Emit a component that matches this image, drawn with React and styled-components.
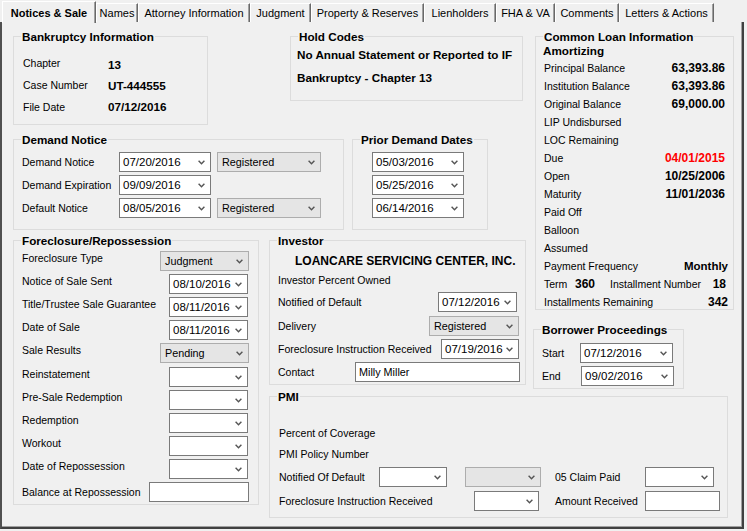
import React from 'react';
import styled, { createGlobalStyle } from 'styled-components';

const GlobalStyle = createGlobalStyle`
  html, body { margin: 0; padding: 0; background: #f0f0f0; }
  body { font-family: "Liberation Sans", Arial, sans-serif; font-size: 10.5px; color: #000; }
  * { box-sizing: border-box; }
`;

const Window = styled.div`
  width: 747px;
  height: 531px;
  background: #f0f0f0;
  display: flex;
  flex-direction: column;
  overflow: hidden;
`;

const TabStrip = styled.div`
  display: flex;
  align-items: flex-end;
  height: 22px;
  padding-left: 2px;
  flex-shrink: 0;
`;

const Tab = styled.div`
  width: ${(p) => p.$w}px;
  height: ${(p) => (p.$active ? 22 : 19)}px;
  display: flex;
  align-items: center;
  justify-content: center;
  padding-top: ${(p) => (p.$active ? 1 : 0)}px;
  font-size: 11px;
  font-weight: ${(p) => (p.$active ? 700 : 400)};
  white-space: nowrap;
  border-top: 1px solid #ffffff;
  border-left: 1px solid #ffffff;
  border-right: 1px solid #696969;
  box-shadow: inset -1px 0 0 #a0a0a0;
  margin-bottom: ${(p) => (p.$active ? -1 : 0)}px;
  position: relative;
  z-index: ${(p) => (p.$active ? 1 : 0)};
  background: #f0f0f0;
`;

const Panel = styled.div`
  width: 744px;
  height: 507px;
  border-left: 2px solid #505050;
  border-right: 2px solid #404040;
  border-bottom: 2px solid #404040;
  box-shadow: inset -1px -1px 0 #a0a0a0;
  padding: 14px 0 0 11px;
`;

const Grid = styled.div`
  display: grid;
  grid-template-columns: 195px 51px 10px 21px 54px 8px 136px 35px 3px 7px 2px 149px 44px 6px;
  grid-template-rows: 65px 24px 14px 91px 10px 70px 19px 56px 4px 7px 109px 13px;
`;

const Group = styled.section`
  grid-column: ${(p) => p.$col};
  grid-row: ${(p) => p.$row};
  border: 1px solid #dcdcdc;
  display: flex;
  flex-direction: column;
  min-width: 0;
`;

const Legend = styled.div`
  align-self: flex-start;
  margin: -7px 0 0 7px;
  padding: 0 1px;
  height: 14px;
  line-height: 14px;
  background: #f0f0f0;
  font-weight: 700;
  font-size: 11.7px;
  white-space: nowrap;
`;

const Body = styled.div`
  display: flex;
  flex-direction: column;
  padding: ${(p) => p.$pt ?? 0}px ${(p) => p.$pr ?? 0}px 0 ${(p) => p.$pl ?? 8}px;
  gap: ${(p) => p.$gap ?? 0}px;
`;

const Line = styled.div`
  display: flex;
  align-items: ${(p) => (p.$top ? 'flex-start' : 'center')};
  justify-content: ${(p) => (p.$spread ? 'space-between' : 'flex-start')};
  height: ${(p) => p.$h ?? 20}px;
  margin-top: ${(p) => p.$mt ?? 0}px;
  flex-shrink: 0;
`;

const Label = styled.span`
  flex-shrink: 0;
  white-space: nowrap;
  width: ${(p) => (p.$w ? `${p.$w}px` : 'auto')};
  margin-left: ${(p) => p.$ml ?? 0}px;
  font-size: 10.5px;
  line-height: 14px;
`;

const Strong = styled.span`
  flex-shrink: 0;
  white-space: nowrap;
  font-weight: 700;
  font-size: ${(p) => p.$size ?? 11.7}px;
  line-height: 14px;
  width: ${(p) => (p.$w ? `${p.$w}px` : 'auto')};
  color: ${(p) => (p.$red ? '#ff0000' : '#000000')};
  margin-left: ${(p) => (p.$push ? 'auto' : `${p.$ml ?? 0}px`)};
  margin-right: ${(p) => p.$mr ?? 0}px;
  margin-top: ${(p) => p.$mt ?? 0}px;
`;

const ComboBox = styled.div`
  flex-shrink: 0;
  width: ${(p) => p.$w}px;
  height: 20px;
  display: flex;
  align-items: center;
  justify-content: space-between;
  padding: 0 5px 0 ${(p) => (p.$grey ? 4 : 3)}px;
  margin-left: ${(p) => p.$ml ?? 0}px;
  margin-right: ${(p) => p.$mr ?? 0}px;
  background: ${(p) => (p.$grey ? '#e5e5e5' : '#ffffff')};
  border: 1px solid ${(p) => (p.$grey ? '#adadad' : '#7a7a7a')};
`;

const ComboText = styled.span`
  font-size: ${(p) => (p.$date ? 11.5 : 10.8)}px;
  line-height: 14px;
  white-space: nowrap;
`;

const TextBox = styled.div`
  flex-shrink: 0;
  width: ${(p) => p.$w}px;
  height: 20px;
  display: flex;
  align-items: center;
  padding-left: 3px;
  margin-right: ${(p) => p.$mr ?? 0}px;
  background: #ffffff;
  border: 1px solid #7a7a7a;
  font-size: 10.8px;
`;

function Chevron() {
  return (
    <svg width="7" height="5" viewBox="0 0 7 5">
      <polyline points="0.6,0.8 3.5,3.8 6.4,0.8" fill="none" stroke="#555555" strokeWidth="1.4" />
    </svg>
  );
}

function Combo({ w, value, grey, date, ml, mr }) {
  return (
    <ComboBox $w={w} $grey={grey} $ml={ml} $mr={mr}>
      <ComboText $date={date}>{value}</ComboText>
      <Chevron />
    </ComboBox>
  );
}

const tabs = [
  { label: 'Notices & Sale', w: 94, active: true },
  { label: 'Names', w: 42 },
  { label: 'Attorney Information', w: 112 },
  { label: 'Judgment', w: 61 },
  { label: 'Property & Reserves', w: 113 },
  { label: 'Lienholders', w: 72 },
  { label: 'FHA & VA', w: 59 },
  { label: 'Comments', w: 64 },
  { label: 'Letters & Actions', w: 95 },
];

const loanRows = [
  ['Principal Balance', '63,393.86'],
  ['Institution Balance', '63,393.86'],
  ['Original Balance', '69,000.00'],
  ['LIP Undisbursed', ''],
  ['LOC Remaining', ''],
  ['Due', '04/01/2015', true],
  ['Open', '10/25/2006'],
  ['Maturity', '11/01/2036'],
  ['Paid Off', ''],
  ['Balloon', ''],
  ['Assumed', ''],
];

const foreclosureRows = [
  { label: 'Foreclosure Type', value: 'Judgment', grey: true, w: 89 },
  { label: 'Notice of Sale Sent', value: '08/10/2016', date: true, w: 79 },
  { label: 'Title/Trustee Sale Guarantee', value: '08/11/2016', date: true, w: 79 },
  { label: 'Date of Sale', value: '08/11/2016', date: true, w: 79 },
  { label: 'Sale Results', value: 'Pending', grey: true, w: 89 },
  { label: 'Reinstatement', value: '', w: 79, mt: 1 },
  { label: 'Pre-Sale Redemption', value: '', w: 79 },
  { label: 'Redemption', value: '', w: 79 },
  { label: 'Workout', value: '', w: 79 },
  { label: 'Date of Repossession', value: '', w: 79 },
];

export default function App() {
  return (
    <>
      <GlobalStyle />
      <Window>
        <TabStrip>
          {tabs.map((t) => (
            <Tab key={t.label} $w={t.w} $active={t.active}>
              {t.label}
            </Tab>
          ))}
        </TabStrip>
        <Panel>
          <Grid>
            <Group $col="1 / 2" $row="1 / 3">
              <Legend>Bankruptcy Information</Legend>
              <Body $pt={8} $pl={9}>
                <Line $h={22}>
                  <Label $w={85}>Chapter</Label>
                  <Strong $mt={3}>13</Strong>
                </Line>
                <Line $h={22}>
                  <Label $w={85}>Case Number</Label>
                  <Strong $mt={2}>UT-444555</Strong>
                </Line>
                <Line $h={22}>
                  <Label $w={85}>File Date</Label>
                  <Strong>07/12/2016</Strong>
                </Line>
              </Body>
            </Group>

            <Group $col="5 / 9" $row="1 / 2">
              <Legend>Hold Codes</Legend>
              <Body $pt={3} $pl={6}>
                <Line $h={16}>
                  <Strong>No Annual Statement or Reported to IF</Strong>
                </Line>
                <Line $h={16} $mt={7}>
                  <Strong>Bankruptcy - Chapter 13</Strong>
                </Line>
              </Body>
            </Group>

            <Group $col="12 / 15" $row="1 / 7">
              <Legend>Common Loan Information</Legend>
              <Body $pl={7} $pr={8}>
                <Line $h={14}>
                  <Strong>Amortizing</Strong>
                </Line>
                {loanRows.map(([label, value, red]) => (
                  <Line key={label} $h={18} $mt={label === 'Principal Balance' ? 1 : 0}>
                    <Label $ml={1}>{label}</Label>
                    {value && (
                      <Strong $push $size={12} $red={red}>
                        {value}
                      </Strong>
                    )}
                  </Line>
                ))}
                <Line $h={18}>
                  <Label $ml={1}>Payment Frequency</Label>
                  <Strong $push $size={11.5} $mr={-3}>
                    Monthly
                  </Strong>
                </Line>
                <Line $h={18}>
                  <Label $ml={1} $w={31}>
                    Term
                  </Label>
                  <Strong $size={12} $w={35}>
                    360
                  </Strong>
                  <Label>Installment Number</Label>
                  <Strong $push $size={12} $mr={-1}>
                    18
                  </Strong>
                </Line>
                <Line $h={18}>
                  <Label $ml={1}>Installments Remaining</Label>
                  <Strong $push $size={12} $mr={-3}>
                    342
                  </Strong>
                </Line>
              </Body>
            </Group>

            <Group $col="1 / 6" $row="4 / 5">
              <Legend>Demand Notice</Legend>
              <Body $pt={5} $gap={3}>
                <Line>
                  <Label $w={97}>Demand Notice</Label>
                  <Combo w={92} value="07/20/2016" date />
                  <Combo w={104} value="Registered" grey ml={6} />
                </Line>
                <Line>
                  <Label $w={97}>Demand Expiration</Label>
                  <Combo w={92} value="09/09/2016" date />
                </Line>
                <Line>
                  <Label $w={97}>Default Notice</Label>
                  <Combo w={92} value="08/05/2016" date />
                  <Combo w={104} value="Registered" grey ml={6} />
                </Line>
              </Body>
            </Group>

            <Group $col="7 / 8" $row="4 / 5">
              <Legend>Prior Demand Dates</Legend>
              <Body $pt={5} $pl={19} $gap={3}>
                <Line>
                  <Combo w={92} value="05/03/2016" date />
                </Line>
                <Line>
                  <Combo w={92} value="05/25/2016" date />
                </Line>
                <Line>
                  <Combo w={92} value="06/14/2016" date />
                </Line>
              </Body>
            </Group>

            <Group $col="1 / 3" $row="6 / 12">
              <Legend>Foreclosure/Repossession</Legend>
              <Body $pt={3} $pr={9} $gap={3}>
                {foreclosureRows.map((r) => (
                  <Line key={r.label} $top $spread $mt={r.mt}>
                    <Label>{r.label}</Label>
                    <Combo w={r.w} value={r.value} grey={r.grey} date={r.date} mr={r.grey ? 0 : 1} />
                  </Line>
                ))}
                <Line $spread>
                  <Label>Balance at Repossession</Label>
                  <TextBox $w={100} />
                </Line>
              </Body>
            </Group>

            <Group $col="4 / 10" $row="6 / 9">
              <Legend>Investor</Legend>
              <Body $pt={6}>
                <Line $h={14}>
                  <Strong $size={12} $ml={17}>
                    LOANCARE SERVICING CENTER, INC.
                  </Strong>
                </Line>
                <Line $h={14} $mt={5}>
                  <Label>Investor Percent Owned</Label>
                </Line>
                <Line $mt={5}>
                  <Label $w={160}>Notified of Default</Label>
                  <Combo w={79} value="07/12/2016" date />
                </Line>
                <Line $mt={4}>
                  <Label $w={151}>Delivery</Label>
                  <Combo w={90} value="Registered" grey />
                </Line>
                <Line $mt={3}>
                  <Label $w={163}>Foreclosure Instruction Received</Label>
                  <Combo w={78} value="07/19/2016" date />
                </Line>
                <Line $mt={3}>
                  <Label $w={77}>Contact</Label>
                  <TextBox $w={165}>Milly Miller</TextBox>
                </Line>
              </Body>
            </Group>

            <Group $col="11 / 13" $row="8 / 10">
              <Legend>Borrower Proceedings</Legend>
              <Body $pt={6} $gap={3}>
                <Line>
                  <Label $w={38}>Start</Label>
                  <Combo w={93} value="07/12/2016" date />
                </Line>
                <Line>
                  <Label $w={39}>End</Label>
                  <Combo w={93} value="09/02/2016" date />
                </Line>
              </Body>
            </Group>

            <Group $col="4 / 14" $row="11 / 13">
              <Legend>PMI</Legend>
              <Body $pt={22} $pl={9}>
                <Line $h={14}>
                  <Label>Percent of Coverage</Label>
                </Line>
                <Line $h={14} $mt={7}>
                  <Label>PMI Policy Number</Label>
                </Line>
                <Line $mt={6}>
                  <Label $w={100}>Notified Of Default</Label>
                  <Combo w={68} value="" />
                  <Combo w={76} value="" grey ml={18} />
                  <Label $w={90} $ml={14}>
                    05 Claim Paid
                  </Label>
                  <Combo w={69} value="" />
                </Line>
                <Line $mt={4}>
                  <Label $w={195}>Foreclosure Instruction Received</Label>
                  <Combo w={65} value="" />
                  <Label $w={90} $ml={16}>
                    Amount Received
                  </Label>
                  <TextBox $w={75} />
                </Line>
              </Body>
            </Group>
          </Grid>
        </Panel>
      </Window>
    </>
  );
}
